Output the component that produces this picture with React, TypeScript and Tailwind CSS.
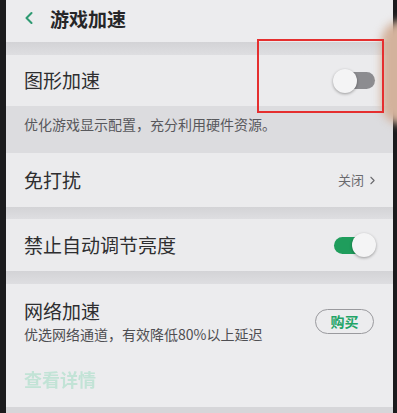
import { ChevronLeft, ChevronRight } from "lucide-react"

const Toggle = ({ on }: { on: boolean }) => (
  <div className="relative w-[44px] h-[24px] flex items-center">
    <div
      className={
        on
          ? "ml-[2px] w-[40px] h-[17px] rounded-full bg-[#1f9d5c]"
          : "ml-[2px] w-[40px] h-[17px] rounded-full bg-[#8c8c90]"
      }
    />
    <div
      className={
        on
          ? "absolute right-0 top-0 size-[24px] rounded-full bg-[#f4f4f5] shadow-[0_1px_3px_rgba(0,0,0,0.35)]"
          : "absolute left-0 top-0 size-[24px] rounded-full bg-[#f4f4f5] shadow-[0_1px_3px_rgba(0,0,0,0.35)]"
      }
    />
  </div>
)

const Gap = ({ h }: { h: string }) => (
  <div className={`${h} bg-gradient-to-b from-[#d3d3d6] to-[#dedee1]`} />
)

export default function App() {
  return (
    <div
      className="relative w-[397px] h-[413px] overflow-hidden bg-[#1b1b1d]"
      style={{ fontFamily: '"Noto Sans CJK SC", "Noto Sans", sans-serif' }}
    >
      <div className="ml-[6px] mr-[4px] h-full flex flex-col bg-[#e9e9eb] text-[#2e2e30]">
        {/* header */}
        <div className="h-[42px] flex items-start pt-[5px] pl-[13px] bg-[#ececee]">
          <ChevronLeft className="size-[20px] mt-[3px] text-[#2e9a72]" strokeWidth={2.5} />
          <span className="ml-[11px] text-[19px] font-bold text-[#262628]">游戏加速</span>
        </div>
        <Gap h="h-[13px]" />

        <div className="h-[51px] flex items-center justify-between pl-[18px] pr-[16px] bg-[#ebebed]">
          <span className="text-[19px]">图形加速</span>
          <Toggle on={false} />
        </div>
        <div className="h-[47px] flex items-start pt-[8px] pl-[18px] bg-[#dcdcdf]">
          <span className="text-[14px] text-[#58585c]">优化游戏显示配置，充分利用硬件资源。</span>
        </div>

        <div className="h-[54px] flex items-center justify-between pl-[18px] pr-[14px] bg-[#ebebed]">
          <span className="text-[19px]">免打扰</span>
          <span className="flex items-center text-[13px] text-[#6a6a6e]">
            关闭
            <ChevronRight className="size-[13px] ml-[2px]" strokeWidth={2} />
          </span>
        </div>
        <Gap h="h-[12px]" />

        <div className="h-[52px] flex items-center justify-between pl-[18px] pr-[17px] bg-[#ebebed]">
          <span className="text-[19px]">禁止自动调节亮度</span>
          <Toggle on={true} />
        </div>
        <Gap h="h-[13px]" />

        <div className="flex-1 flex flex-col pl-[18px] pr-[19px] bg-[#ececee]">
          <div className="flex items-center justify-between mt-[14px]">
            <div className="flex flex-col">
              <span className="text-[19px] leading-[26px]">网络加速</span>
              <span className="text-[14px] leading-[20px] text-[#4e4e52]">
                优选网络通道，有效降低80%以上延迟
              </span>
            </div>
            <div className="w-[59px] h-[25px] flex items-center justify-center rounded-full border-[1.5px] border-[#9a9a9e] text-[14px] font-bold text-[#22a466]">
              购买
            </div>
          </div>
          <span className="mt-[22px] text-[18px] font-bold text-[#c2e3d6] blur-[0.7px]">查看详情</span>
        </div>
        <div className="h-[6px] bg-[#d6d6d9]" />
      </div>

      {/* finger */}
      <div className="absolute left-[381px] top-[20px] w-[44px] h-[105px] rounded-full bg-[#d3b29c] blur-[4px]" />

      {/* red highlight box */}
      <div className="absolute left-[257px] top-[39px] w-[127px] h-[74px] border-[2.5px] border-[#e52f2f]" />
    </div>
  )
}
